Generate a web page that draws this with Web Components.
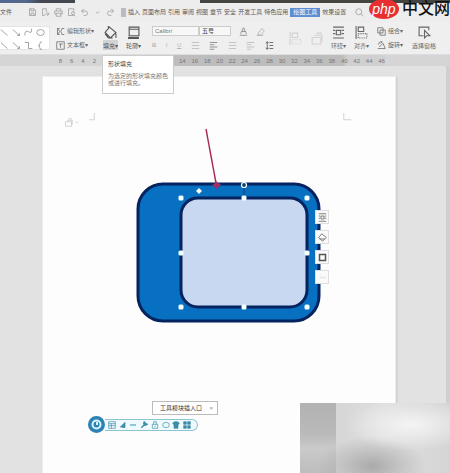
<!DOCTYPE html>
<html lang="zh-CN">
<head>
<meta charset="utf-8">
<title>绘图工具</title>
<style>
html,body{margin:0;height:100%}
body{font-family:"Liberation Sans","Noto Sans CJK SC",sans-serif;font-size:6px;line-height:8px;color:#555;background:#e3e3e3;overflow:hidden}
</style>
</head>
<body>
<writer-app></writer-app>
<script>
const ICONS={
save:'<path d="M2 1h6l2 2v7H2zM4 1v3h4V1M4 10V7h4v3"/>',
exportf:'<path d="M2 1h5v4M2 1v9h3M5 8h5M8 5l3 3-3 2"/>',
print:'<path d="M3 4V1h6v3M3 8H1V4h10v4H9M3 7h6v4H3z"/>',
preview:'<path d="M9 10H2V1h7v4"/><circle cx="8" cy="7" r="2"/><path d="M9 9l2 2"/>',
undo:'<path d="M5 1L2 4l3 3M2 4h5q3 0 3 3t-3 3H5"/>',
redo:'<path d="M7 1l3 3-3 3M10 4H5Q2 4 2 7t3 3h2"/>',
down:'<path d="M4 5l2 2 2-2"/>',
search:'<circle cx="5" cy="5" r="4"/><path d="M8 8l3 3"/>',
edit:'<path d="M5 2H2v8h3M2 2l3 4-3 4M11 2H8q-3 4 0 8h3"/>',
textbox:'<path d="M1 1h10v10H1zM4 4h5M6 4v5"/>',
bucket:'<path d="M4 0v3M5 1l6 5-5 5-5-5zM1 7l3 4h4M11 7v4"/>',
outline:'<path d="M2 1h9v8H2zM2 3h9"/><path d="M1 11h10" stroke-width="2"/>',
lines:'<path d="M1 2h10M1 6h10M1 10h10"/>',
left:'<path d="M1 2h10M1 5h6M1 8h10M1 11h6"/>',
spacing:'<path d="M3 1v10M1 3l2-2 2 2M1 9l2 2 2-2M6 2h5M6 6h5M6 10h5"/>',
wrap:'<path d="M1 1h10M1 11h10M1 4h2M9 4h2M1 7h2M9 7h2M4 4h4v4H4z"/>',
align:'<path d="M1 0v12M3 1h5v4H3z"/><path d="M3 7h8v4H3z" stroke-dasharray="1 1"/>',
group:'<path d="M1 1h7v7H1zM4 4h7v7H4z"/>',
rotate:'<path d="M3 8L8 3l3 7H1M2 5Q2 1 6 1M5 0l2 1-2 2"/>',
pane:'<path d="M10 4V1H1v8h4M6 4l5 5H8l-2 2z"/>',
layers:'<path d="M2 5h8v6H2zM4 3h7v6M6 1h5"/>',
a:'<path d="M2 9l4-8 4 8M4 6h4M1 11h10"/>',
clear:'<path d="M3 8l5-6 3 3-5 6H3zM1 11h9"/>',
line:'<path d="M1 2l9 8"/>',
arrow:'<path d="M1 2l9 8M7 10h3V7"/>',
elbow:'<path d="M1 2h5v8h5"/>',
curve:'<path d="M1 10Q1 2 6 5t4-4"/>',
oval:'<ellipse cx="6" cy="6" rx="5" ry="4"/>',
brace:'<path d="M8 1Q5 1 5 4t-2 2q2 0 2 3t3 2"/>',
diamond:'<path d="M5 1l6 5-5 5-5-5zM2 8h7"/>',
square:'<path d="M2 2h8v8H2z" stroke-width="2"/>',
dots:'<path d="M2 6h2M5 6h2M8 6h2" stroke-width="2"/>',
wrench:'<path d="M2 10l6-6M7 1l1 3 3 1q-4 3-5 0t1-4" stroke-width="2"/>',
pen:'<path d="M2 9l7-7v8z" fill="currentColor"/>',
shirt:'<path d="M1 3l3-2h4l3 2-2 3v5H3V6z" fill="currentColor"/>',
tiles:'<path d="M1 1h4v4H1zM7 1h4v4H7zM1 7h4v4H1zM7 7h4v4H7z" fill="currentColor"/>',
lock:'<path d="M2 5h8v6H2zM4 5V1h4v4M5 8h2"/>',
grid:'<path d="M1 1h10v10H1zM1 4h10M1 7h10M5 4v7"/>',
corner:'<path d="M11 0v9H4"/>',
cornerr:'<path d="M1 0v9h10"/>'
};
const icon=n=>`<ui-icon name="${n}"></ui-icon>`;
const define=(tag,css,html)=>customElements.define(tag,class extends HTMLElement{
 constructor(){super();this.attachShadow({mode:'open'}).innerHTML=`<style>*{box-sizing:border-box}button,select{font:inherit;color:inherit;border:0;padding:0;margin:0;background:none;border-radius:0}${css}</style>${html||''}`}
});
customElements.define('ui-icon',class extends HTMLElement{
 connectedCallback(){if(this.shadowRoot)return;this.attachShadow({mode:'open'}).innerHTML=`<style>:host{display:inline-flex;width:9px;height:9px;flex:none}svg{width:100%;height:100%;display:block}</style><svg viewBox="0 0 12 12" fill="none" stroke="currentColor" aria-hidden="true">${ICONS[this.getAttribute('name')]||''}</svg>`}
});
customElements.define('command-button',class extends HTMLElement{
 connectedCallback(){if(this.shadowRoot)return;this.attachShadow({mode:'open'}).innerHTML=`<style>:host{display:block;flex:none}button{font:inherit;color:inherit;border:0;padding:0;background:none;display:flex;align-items:center;gap:2px;white-space:nowrap;line-height:8px}:host([big]) button{flex-direction:column;gap:3px}:host([big]) ui-icon{width:13px;height:13px}:host([on]) button{background:linear-gradient(transparent 60%,#d3d3d3 60%)}</style><button aria-label="${this.getAttribute('label')||this.textContent}">${icon(this.getAttribute('icon'))}<slot></slot></button>`}
});
define('title-strip',':host{display:flex;height:3px;background:#434540}i{background:#eceded}.a{width:75px;background:linear-gradient(90deg,#53688f 35%,#454750 55%)}.b{width:125px}','<i class="a"></i><i class="b"></i>');
define('menu-bar',`:host{display:flex;align-items:center;height:19px;background:#ededed;color:#5c5c5c}
button{white-space:nowrap;line-height:9px;flex:none}.quick{display:flex;gap:4px;margin-left:16px;color:#999;width:93px;flex:none}.quick button,.find{display:flex}
nav{display:flex;align-items:center;gap:2px;flex:none}.first{border-left:5px solid #b9bcc1;padding-left:2px}.on{background:#5e8ed2;color:#fff;padding:0 3px}.find{margin-left:9px;color:#999}`,
`<button>文件</button><div class="quick">${['save','exportf','print','preview','undo','down','redo','down'].map(n=>`<button aria-label="${n}">${icon(n)}</button>`).join('')}</div><nav>${['插入','页面布局','引用','审阅','视图','章节','安全','开发工具','特色应用','绘图工具','效果设置'].map((t,i)=>`<button class="${i==0?'first':i==9?'on':''}">${t}</button>`).join('')}</nav><button class="find" aria-label="搜索">${icon('search')}</button>`);
define('shape-gallery',':host{display:grid;grid-template-columns:repeat(4,9px);gap:4px 3px;background:#fff;width:50px;padding:1px 0;height:24px;color:#888;flex:none;border:1px solid #e4e4e4;border-left:0;box-sizing:border-box}',['line','arrow','curve','oval','line','arrow','elbow','brace'].map(icon).join(''));
define('font-panel',`:host{display:grid;grid-template-rows:10px 10px;gap:4px;width:122px;color:#777;flex:none}
div{display:flex;align-items:center;gap:8px}select{appearance:none;background:#f7f7f7;border:1px solid #ccc;height:10px;line-height:8px;padding:0 2px}.name{width:47px}.size{width:32px;margin-left:-8px;color:#444}.more{color:#aaa}.fade{color:#b5b5b5;justify-content:space-between}.mid{color:#777}.dark{color:#444}`,
`<div><select class="name" aria-label="字体"><option>Calibri</option></select><select class="size" aria-label="字号"><option>五号</option></select><command-button class="mid" icon="a" label="增大字号"></command-button><command-button class="more" icon="clear" label="清除格式"></command-button></div><div class="fade"><button><b>B</b></button><button><i>I</i></button><button><u>U</u></button><command-button icon="lines" label="项目符号"></command-button><command-button class="mid" icon="left" label="左对齐"></command-button><command-button icon="lines" label="居中"></command-button><command-button icon="left" label="右对齐"></command-button><command-button class="dark" icon="spacing" label="行距"></command-button></div>`);
define('tool-ribbon',`:host{display:flex;align-items:center;height:33px;background:#efefef;border-bottom:1px solid #ddd;overflow:hidden;color:#666;box-sizing:border-box}.stack{display:grid;gap:5px;flex:none}.s1{margin-left:6px;width:47px}.main{display:flex;gap:8px;width:49px;flex:none;color:#555}.more{display:flex;align-items:center;gap:8px;margin-left:15px;flex:1}.off{color:#d2d2d2}.s2{width:27px}`,
`<shape-gallery></shape-gallery><div class="stack s1"><command-button icon="edit">编辑形状▾</command-button><command-button icon="textbox">文本框▾</command-button></div><div class="main"><command-button big on icon="bucket">填充▾</command-button><command-button big icon="outline">轮廓▾</command-button></div><font-panel></font-panel><div class="more"><command-button big class="off" icon="align" label="文字方向"></command-button><command-button big class="off" icon="layers" label="图层"></command-button><command-button big icon="wrap">环绕▾</command-button><command-button big icon="align">对齐▾</command-button><div class="stack s2"><command-button icon="group">组合▾</command-button><command-button icon="rotate">旋转▾</command-button></div><command-button big icon="pane">选择窗格</command-button></div>`);
define('page-ruler',`:host{display:flex;height:11px;background:#d5d5d5;color:#777;align-items:center}.lead{width:102px;display:flex;justify-content:flex-end;gap:8px;padding-right:6px;flex:none}.tip{width:72px;flex:none}.scale{display:flex;justify-content:space-between;width:211px;padding-left:5px;background:linear-gradient(90deg,#bdbdbd 80%,#d0d0d0 82%);align-self:stretch;align-items:center}`,
`<div class="lead"><span>8</span><span>6</span><span>4</span><span>2</span></div><div class="tip"></div><div class="scale">${[14,16,18,20,22,24,26,28,30,32,34,36,38,40,42,44,46].map(n=>`<span>${n}</span>`).join('')}</div>`);
define('fill-tip',':host{display:block;width:72px;height:39px;padding:5px;background:#fff;border:1px solid #ccc;color:#777;line-height:7px;box-sizing:border-box;white-space:nowrap}b{font-weight:400;color:#444;display:block;line-height:7px;margin-bottom:5px}','<b>形状填充</b>为选定的形状填充颜色<br>或进行填充。');
define('quick-tools',':host{display:grid;gap:6px;width:14px}button{display:grid;place-items:center;width:14px;height:14px;background:#fafafa;border:1px solid #ddd;color:#555}button:last-child{color:#ddd}',['wrap','diamond','square','dots'].map((n,i)=>`<button aria-label="${['布局','填充','轮廓','更多'][i]}">${icon(n)}</button>`).join(''));
const handles=[[181,198],[244,198],[307,198],[181,253],[307,253],[181,307],[244,307],[307,307]];
define('shape-drawing',':host{display:block;position:relative;width:200px;height:210px}svg{display:block}quick-tools{position:absolute;left:185px;top:90px}',
`<svg width="200" height="210" viewBox="130 120 200 210"><rect x="138" y="184" width="181" height="137" rx="25" fill="#0870c1" stroke="#05235f" stroke-width="3"/><rect x="181" y="198" width="126" height="109" rx="17" fill="#c8d8f0" stroke="#05235f" stroke-width="3"/><path d="M244 187v10" stroke="#163a72"/><circle cx="244" cy="185" r="2.5" fill="#174170" stroke="#fff" stroke-width="1.2"/>${handles.map(p=>`<rect x="${p[0]-2.5}" y="${p[1]-2.5}" width="5" height="5" rx="1.5" fill="#f4ffff"/>`).join('')}<path d="M199 188l3 3-3 3-3-3z" fill="#f7fff4"/><path d="M206 129L216 183" stroke="#a82a50" stroke-width="1.4"/><path d="M212 185q3-1 4-4 2 3 5 3l-4 5z" fill="#a32e66"/></svg><quick-tools></quick-tools>`);
define('document-page',':host{display:block;flex:1;background:#fdfdfd;border:1px solid #eee;border-bottom:0;box-shadow:1px 1px 2px #c8c8c8;color:#c4c4c4}.marks{display:flex;align-items:flex-start;padding:36px 43px 0 21px;height:43px;gap:0}.marks ui-icon:nth-child(-n+2){margin-top:5px}.marks ui-icon:nth-child(3){margin-left:5px}.marks ui-icon:last-child{margin-left:auto}.marks ui-icon:nth-child(2){width:8px}shape-drawing{margin-left:87px}',
`<div class="marks">${['layers','down','corner','cornerr'].map(icon).join('')}</div><shape-drawing></shape-drawing>`);
define('entry-tip',':host{display:flex;align-items:center;justify-content:space-between;width:66px;height:14px;border:1px solid #bbb;background:#fff;padding:0 4px 0 7px;color:#333;box-sizing:border-box;white-space:nowrap}button{color:#888}','工具模块插入口<button aria-label="关闭">×</button>');
define('float-bar',':host{display:flex;align-items:center;width:110px;height:17px;color:#3d8ba4}.logo{display:grid;place-items:center;width:17px;height:17px;border-radius:50%;background:#2d82b4;flex:none}.logo svg{width:13px}.tools{display:flex;align-items:center;justify-content:space-between;flex:1;height:12px;border:1px solid #8cc4d3;border-left:0;border-radius:0 7px 7px 0;background:#eefbfe;padding:0 6px 0 3px}.tools button{display:flex}ui-icon{width:8px;height:8px}',
`<button class="logo" aria-label="工具"><svg viewBox="0 0 13 13" fill="none" stroke="#d9f6ff" stroke-width="2"><circle cx="6.5" cy="6.5" r="4"/><path d="M7 4v3"/></svg></button><div class="tools">${['grid','pen','dots','wrench','lock','oval','shirt','tiles'].map(n=>`<button aria-label="${n}">${icon(n)}</button>`).join('')}</div>`);
define('site-mark',':host{display:flex;align-items:center;gap:3px;height:20px;font-size:16px;line-height:20px;color:#111;white-space:nowrap;font-weight:500}.php{display:grid;place-items:center;width:30px;height:20px;border-radius:50%;background:#e92e31;color:#fff;font-size:14px;line-height:17px;font-style:italic}','<span class="php">php</span><span>中文网</span>');
define('soft-patch',':host{display:block;width:150px;height:70px;background:radial-gradient(ellipse 66px 26px at 74% 31%,#f4f4f4,transparent),radial-gradient(ellipse 54px 30px at 48% 90%,#aaa,transparent),linear-gradient(#b2b2b2,#bababa 45%,#cacaca 65%,#bdbdbd) 0 0/36px 100% no-repeat,linear-gradient(90deg,#d0d0d0,#dedede 55%,#d5d5d5)}');
define('writer-app',`:host{display:flex;flex-direction:column;min-height:100vh;position:relative;overflow:hidden}main{display:flex;flex:1;flex-direction:column;background:#e2e2e2;border-right:4px solid #d0d0d0;padding:10px 50px 0 42px}fill-tip{position:absolute;left:102px;top:55px}site-mark{position:absolute;right:0;top:-1px}entry-tip{position:absolute;left:152px;top:401px}float-bar{position:absolute;left:88px;top:416px}soft-patch{position:absolute;right:0;bottom:0}`,
`<title-strip></title-strip><menu-bar></menu-bar><tool-ribbon></tool-ribbon><page-ruler></page-ruler><main><document-page></document-page></main><fill-tip></fill-tip><entry-tip></entry-tip><float-bar></float-bar><site-mark></site-mark><soft-patch></soft-patch>`);
</script>
</body>
</html>
